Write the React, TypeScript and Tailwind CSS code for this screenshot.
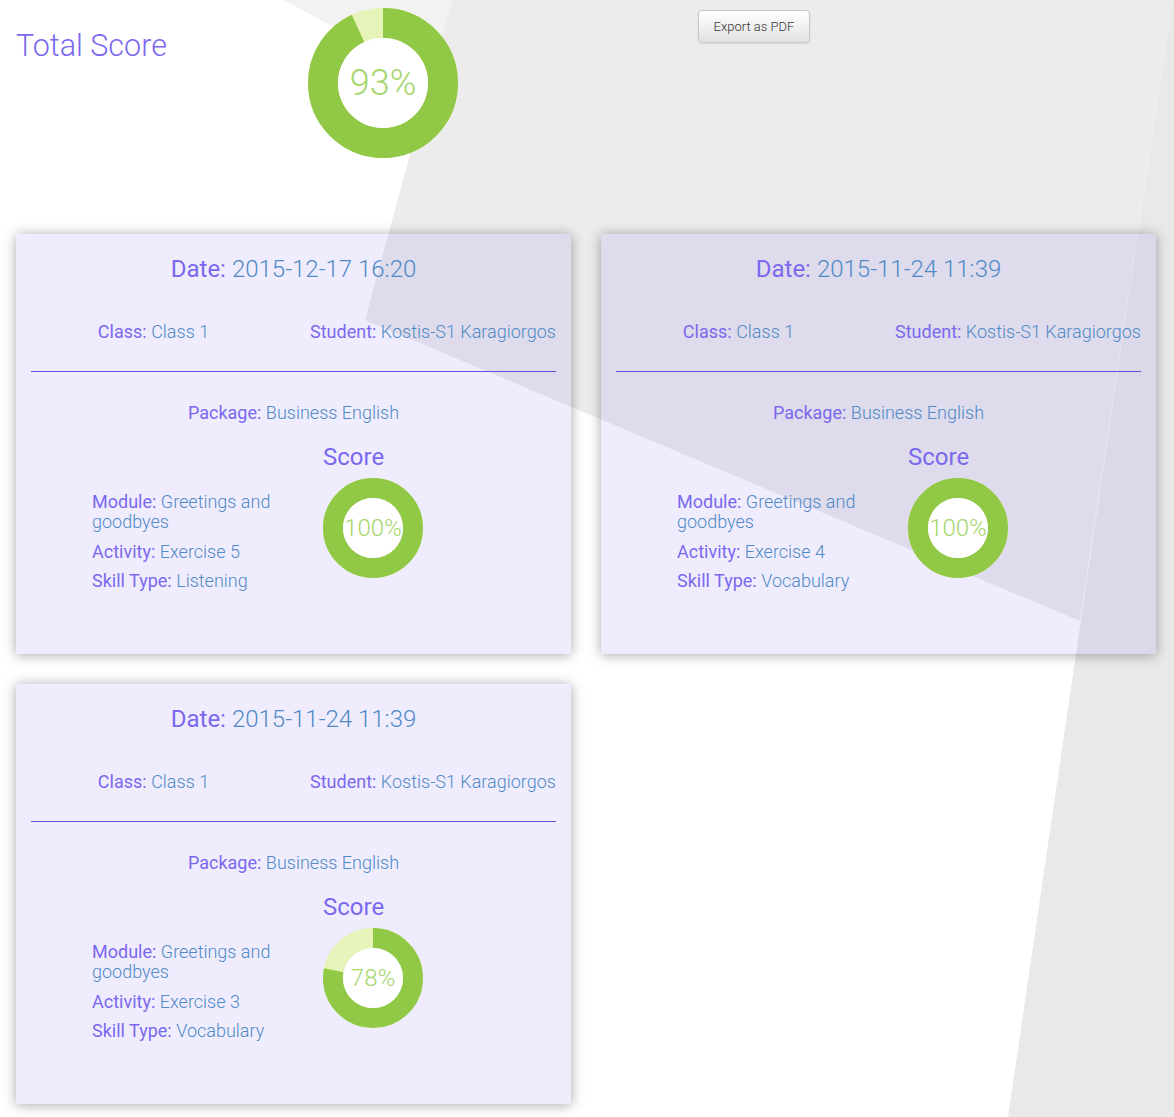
import React from "react";

type Rec = {
  date: string;
  activity: string;
  skill: string;
  pct: number;
};

const records: Rec[] = [
  { date: "2015-12-17 16:20", activity: "Exercise 5", skill: "Listening", pct: 100 },
  { date: "2015-11-24 11:39", activity: "Exercise 4", skill: "Vocabulary", pct: 100 },
  { date: "2015-11-24 11:39", activity: "Exercise 3", skill: "Vocabulary", pct: 78 },
];

function Ring({ pct, size, ring }: { pct: number; size: number; ring: number }) {
  const r = (size - ring) / 2;
  const c = 2 * Math.PI * r;
  const len = (pct / 100) * c;
  return (
    <svg width={size} height={size} viewBox={`0 0 ${size} ${size}`} className="block">
      <circle cx={size / 2} cy={size / 2} r={r} fill="none" stroke="#e6f3b9" strokeWidth={ring} />
      <circle
        cx={size / 2}
        cy={size / 2}
        r={r}
        fill="none"
        stroke="#91c845"
        strokeWidth={ring}
        strokeDasharray={`${len} ${c}`}
        transform={`rotate(-90 ${size / 2} ${size / 2})`}
      />
      <circle cx={size / 2} cy={size / 2} r={size / 2 - ring} fill="#ffffff" />
    </svg>
  );
}

function L({ children }: { children: React.ReactNode }) {
  return <span className="font-normal text-[#7b68ee]">{children}</span>;
}
function V({ children }: { children: React.ReactNode }) {
  return <span className="font-light text-[#4f89c6]">{children}</span>;
}

function Card({ rec }: { rec: Rec }) {
  return (
    <div className="h-[420px] bg-[rgba(123,104,238,0.12)] shadow-[0_1px_12px_rgba(0,0,0,0.35)] pt-[21px]">
      <div className="text-center text-[24px] leading-[28px]">
        <L>Date:</L> <V>{rec.date}</V>
      </div>
      <div className="mt-[38px] flex text-[18px] leading-[22px]">
        <div className="ml-[15px] w-[245px] text-center">
          <L>Class:</L> <V>Class 1</V>
        </div>
        <div className="ml-[34px] whitespace-nowrap">
          <L>Student:</L> <V>Kostis-S1 Karagiorgos</V>
        </div>
      </div>
      <div className="mx-[15px] mt-[28px] h-px bg-[#5a54d8]" />
      <div className="mt-[30px] text-center text-[18px] leading-[22px]">
        <L>Package:</L> <V>Business English</V>
      </div>
      <div className="mt-[19px] flex">
        <div className="ml-[76px] w-[231px] pt-[49px] text-[18px] leading-[20px]">
          <div className="w-[200px]">
            <L>Module:</L> <V>Greetings and goodbyes</V>
          </div>
          <div className="mt-[10px]">
            <L>Activity:</L> <V>{rec.activity}</V>
          </div>
          <div className="mt-[9px]">
            <L>Skill Type:</L> <V>{rec.skill}</V>
          </div>
        </div>
        <div>
          <div className="text-[24px] leading-[28px] text-[#7b68ee]">Score</div>
          <div className="relative mt-[7px] w-[100px] h-[100px]">
            <Ring pct={rec.pct} size={100} ring={20} />
            <div className="absolute inset-0 flex items-center justify-center text-[24px] font-light text-[#a6d66f]">
              {rec.pct}%
            </div>
          </div>
        </div>
      </div>
    </div>
  );
}

export default function App() {
  return (
    <div className="relative min-h-[1117px] w-full overflow-hidden bg-white font-['Roboto','Liberation_Sans',sans-serif]">
      <svg
        className="absolute left-0 top-0"
        width={1174}
        height={1117}
        viewBox="0 0 1174 1117"
      >
        <polygon points="283,0 452,0 431,78" fill="#f2f2f2" />
        <polygon points="452,0 1172,0 1080,621 365,320" fill="#ececec" />
        <polygon points="1172,0 1174,0 1174,1117 1008,1117" fill="#e9e9e9" />
      </svg>
      <div className="relative">
        <div className="flex h-[234px]">
          <div className="w-[308px] pl-[16px] pt-[27px]">
            <h1 className="text-[30.5px] leading-[38px] font-light text-[#7b68ee]">Total Score</h1>
          </div>
          <div className="relative mt-[8px] w-[150px] h-[150px]">
            <Ring pct={93} size={150} ring={30} />
            <div className="absolute inset-0 flex items-center justify-center text-[36px] font-light text-[#a6d66f]">
              93%
            </div>
          </div>
          <div className="ml-[240px] mt-[10px]">
            <button className="h-[33px] w-[112px] rounded-[4px] border border-[#c8c8c8] bg-gradient-to-b from-white to-[#e2e2e2] text-[13px] font-light text-[#333] shadow-[0_1px_2px_rgba(0,0,0,0.1)]">
              Export as PDF
            </button>
          </div>
        </div>
        <div className="grid grid-cols-[555px_555px] gap-x-[30px] gap-y-[30px] px-[16px] pb-[16px]">
          {records.map((r, i) => (
            <Card key={i} rec={r} />
          ))}
        </div>
      </div>
    </div>
  );
}
